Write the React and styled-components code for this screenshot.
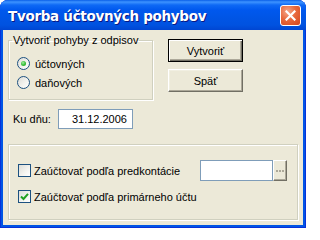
import React from 'react'
import styled, {createGlobalStyle} from 'styled-components'

const Global = createGlobalStyle`
body{
  margin:0;
  background:#fff;
  font-family:"Liberation Sans", Arial, sans-serif;
  font-size:11px;
  color:#000;
}
`

const Window = styled.div`
width:306px;
height:228px;
box-sizing:border-box;
display:flex;
flex-direction:column;
background:#0055E5;
border-radius:8px 8px 0 0;
padding:0 3px 3px;
box-shadow:inset 1px 0 #0831D9, inset -1px 0 #0831D9, inset 0 -1px #0831D9;
`

const TitleBar = styled.div`
height:30px;
margin:0 -3px;
padding:0 5px 0 8px;
display:flex;
align-items:center;
justify-content:space-between;
border-radius:8px 8px 0 0;
background:linear-gradient(to bottom,#0A5FE8 0px,#3D93FF 2px,#0E69F5 5px,#0058EE 10px,#0055E5 18px,#0052E0 25px,#0046D2 30px);
`

const Title = styled.span`
color:#fff;
font-family:"DejaVu Sans", "Liberation Sans", sans-serif;
font-weight:bold;
font-size:13.5px;
letter-spacing:-0.3px;
text-shadow:1px 1px #0A1883;
margin-top:1px;
`

const CloseButton = styled.div`
width:21px;
height:21px;
box-sizing:border-box;
border:1px solid #fff;
border-radius:3px;
background:radial-gradient(circle at 35% 30%,#F5A78A 0%,#E8693D 45%,#D4451C 100%);
display:flex;
align-items:center;
justify-content:center;
`

const Client = styled.div`
flex:1;
background:#ECE9D8;
display:flex;
flex-direction:column;
`

const TopRow = styled.div`
display:flex;
align-items:flex-start;
margin:4px 0 0 5px;
gap:15px;
`

const GroupBox = styled.fieldset`
margin:0;
box-sizing:border-box;
width:${p => p.$w}px;
height:${p => p.$h}px;
padding:${p => p.$pad};
border:1px solid #D0D0BF;
box-shadow:1px 1px #fff, inset 1px 1px #fff;
border-radius:0;
min-width:0;
`

const Legend = styled.legend`
padding:0 1px;
margin-left:0;
line-height:13px;
font-size:11px;
`

const GroupBoxPlain = styled(GroupBox)`
margin:15px 0 0 5px;
`

const ButtonColumn = styled.div`
display:flex;
flex-direction:column;
gap:7px;
margin-top:5px;
`

const Button = styled.div`
width:75px;
height:23px;
box-sizing:border-box;
display:flex;
align-items:center;
justify-content:center;
background:#ECE9D8;
border:1px solid;
border-color:#fff #716F64 #716F64 #fff;
box-shadow:inset -1px -1px #ACA899, inset 1px 1px #F1EFE2;
font-size:11px;
${p => p.$default && `
  border-color:#000;
  box-shadow:inset 1px 1px #fff, inset -1px -1px #716F64, inset -2px -2px #ACA899;
`}
`

const OptionRow = styled.label`
display:flex;
align-items:center;
height:${p => p.$h || 19}px;
gap:${p => p.$gap}px;
`

const Radio = styled.span`
width:13px;
height:13px;
box-sizing:border-box;
border-radius:50%;
border:1px solid #1C5180;
background:linear-gradient(135deg,#DCDCD7 0%,#F4F4F0 60%,#fff 100%);
display:flex;
align-items:center;
justify-content:center;
&::after{
  content:'';
  width:5px;
  height:5px;
  border-radius:50%;
  background:radial-gradient(circle at 40% 35%,#9FF09F 0%,#3ABF3A 50%,#21A121 100%);
  display:${p => p.$on ? 'block' : 'none'};
}
`

const Check = styled.span`
width:13px;
height:13px;
box-sizing:border-box;
border:1px solid #1C5180;
background:linear-gradient(135deg,#DCDCD7 0%,#F4F4F0 60%,#fff 100%);
display:flex;
align-items:center;
justify-content:center;
`

const RadioList = styled.div`
display:flex;
flex-direction:column;
padding:7px 0 0 5px;
`

const DateRow = styled.div`
display:flex;
align-items:center;
margin:9px 0 0 10px;
gap:7px;
`

const TextBox = styled.div`
width:${p => p.$w}px;
height:${p => p.$h}px;
box-sizing:border-box;
border:1px solid #7F9DB9;
background:#fff;
display:flex;
align-items:center;
padding-left:${p => p.$pl || 3}px;
`

const CheckList = styled.div`
display:flex;
flex-direction:column;
gap:9px;
padding:15px 0 0 9px;
`

const PickRow = styled.div`
display:flex;
align-items:center;
justify-content:space-between;
padding-right:10px;
`

const Picker = styled.div`
display:flex;
`

const DotButton = styled.div`
width:14px;
height:21px;
box-sizing:border-box;
background:#ECE9D8;
border:1px solid;
border-color:#fff #716F64 #716F64 #fff;
box-shadow:inset -1px -1px #ACA899;
display:flex;
align-items:center;
justify-content:center;
`

const App = () => {
  return (
    <>
      <Global/>
      <Window>
        <TitleBar>
          <Title>Tvorba účtovných pohybov</Title>
          <CloseButton>
            <svg width="11" height="11" viewBox="0 0 11 11">
              <path d="M1.5 1.5 L9.5 9.5 M9.5 1.5 L1.5 9.5" stroke="#fff" strokeWidth="2.2" strokeLinecap="square"/>
            </svg>
          </CloseButton>
        </TitleBar>
        <Client>
          <TopRow>
            <GroupBox $w={145} $h={66} $pad="0 0 0 3px">
              <Legend>Vytvoriť pohyby z odpisov</Legend>
              <RadioList>
                <OptionRow $gap={5}><Radio $on/>účtovných</OptionRow>
                <OptionRow $gap={5}><Radio/>daňových</OptionRow>
              </RadioList>
            </GroupBox>
            <ButtonColumn>
              <Button $default>Vytvoriť</Button>
              <Button>Späť</Button>
            </ButtonColumn>
          </TopRow>
          <DateRow>
            <span>Ku dňu:</span>
            <TextBox $w={75} $h={20} $pl={13}>31.12.2006</TextBox>
          </DateRow>
          <GroupBoxPlain $w={290} $h={76} $pad="0">
            <CheckList>
              <PickRow>
                <OptionRow $h={21} $gap={3}><Check/>Zaúčtovať podľa predkontácie</OptionRow>
                <Picker>
                  <TextBox $w={73} $h={21}/>
                  <DotButton>
                    <svg width="8" height="2" viewBox="0 0 8 2">
                      <rect x="0" y="0" width="2" height="2" fill="#ACA899"/>
                      <rect x="3" y="0" width="2" height="2" fill="#ACA899"/>
                      <rect x="6" y="0" width="2" height="2" fill="#ACA899"/>
                    </svg>
                  </DotButton>
                </Picker>
              </PickRow>
              <OptionRow $h={13} $gap={3}>
                <Check>
                  <svg width="9" height="9" viewBox="0 0 9 9">
                    <path d="M1 4.5 L3.5 7 L8 1.8" fill="none" stroke="#21A121" strokeWidth="2"/>
                  </svg>
                </Check>
                Zaúčtovať podľa primárneho účtu
              </OptionRow>
            </CheckList>
          </GroupBoxPlain>
        </Client>
      </Window>
    </>
  )
}

export default App
